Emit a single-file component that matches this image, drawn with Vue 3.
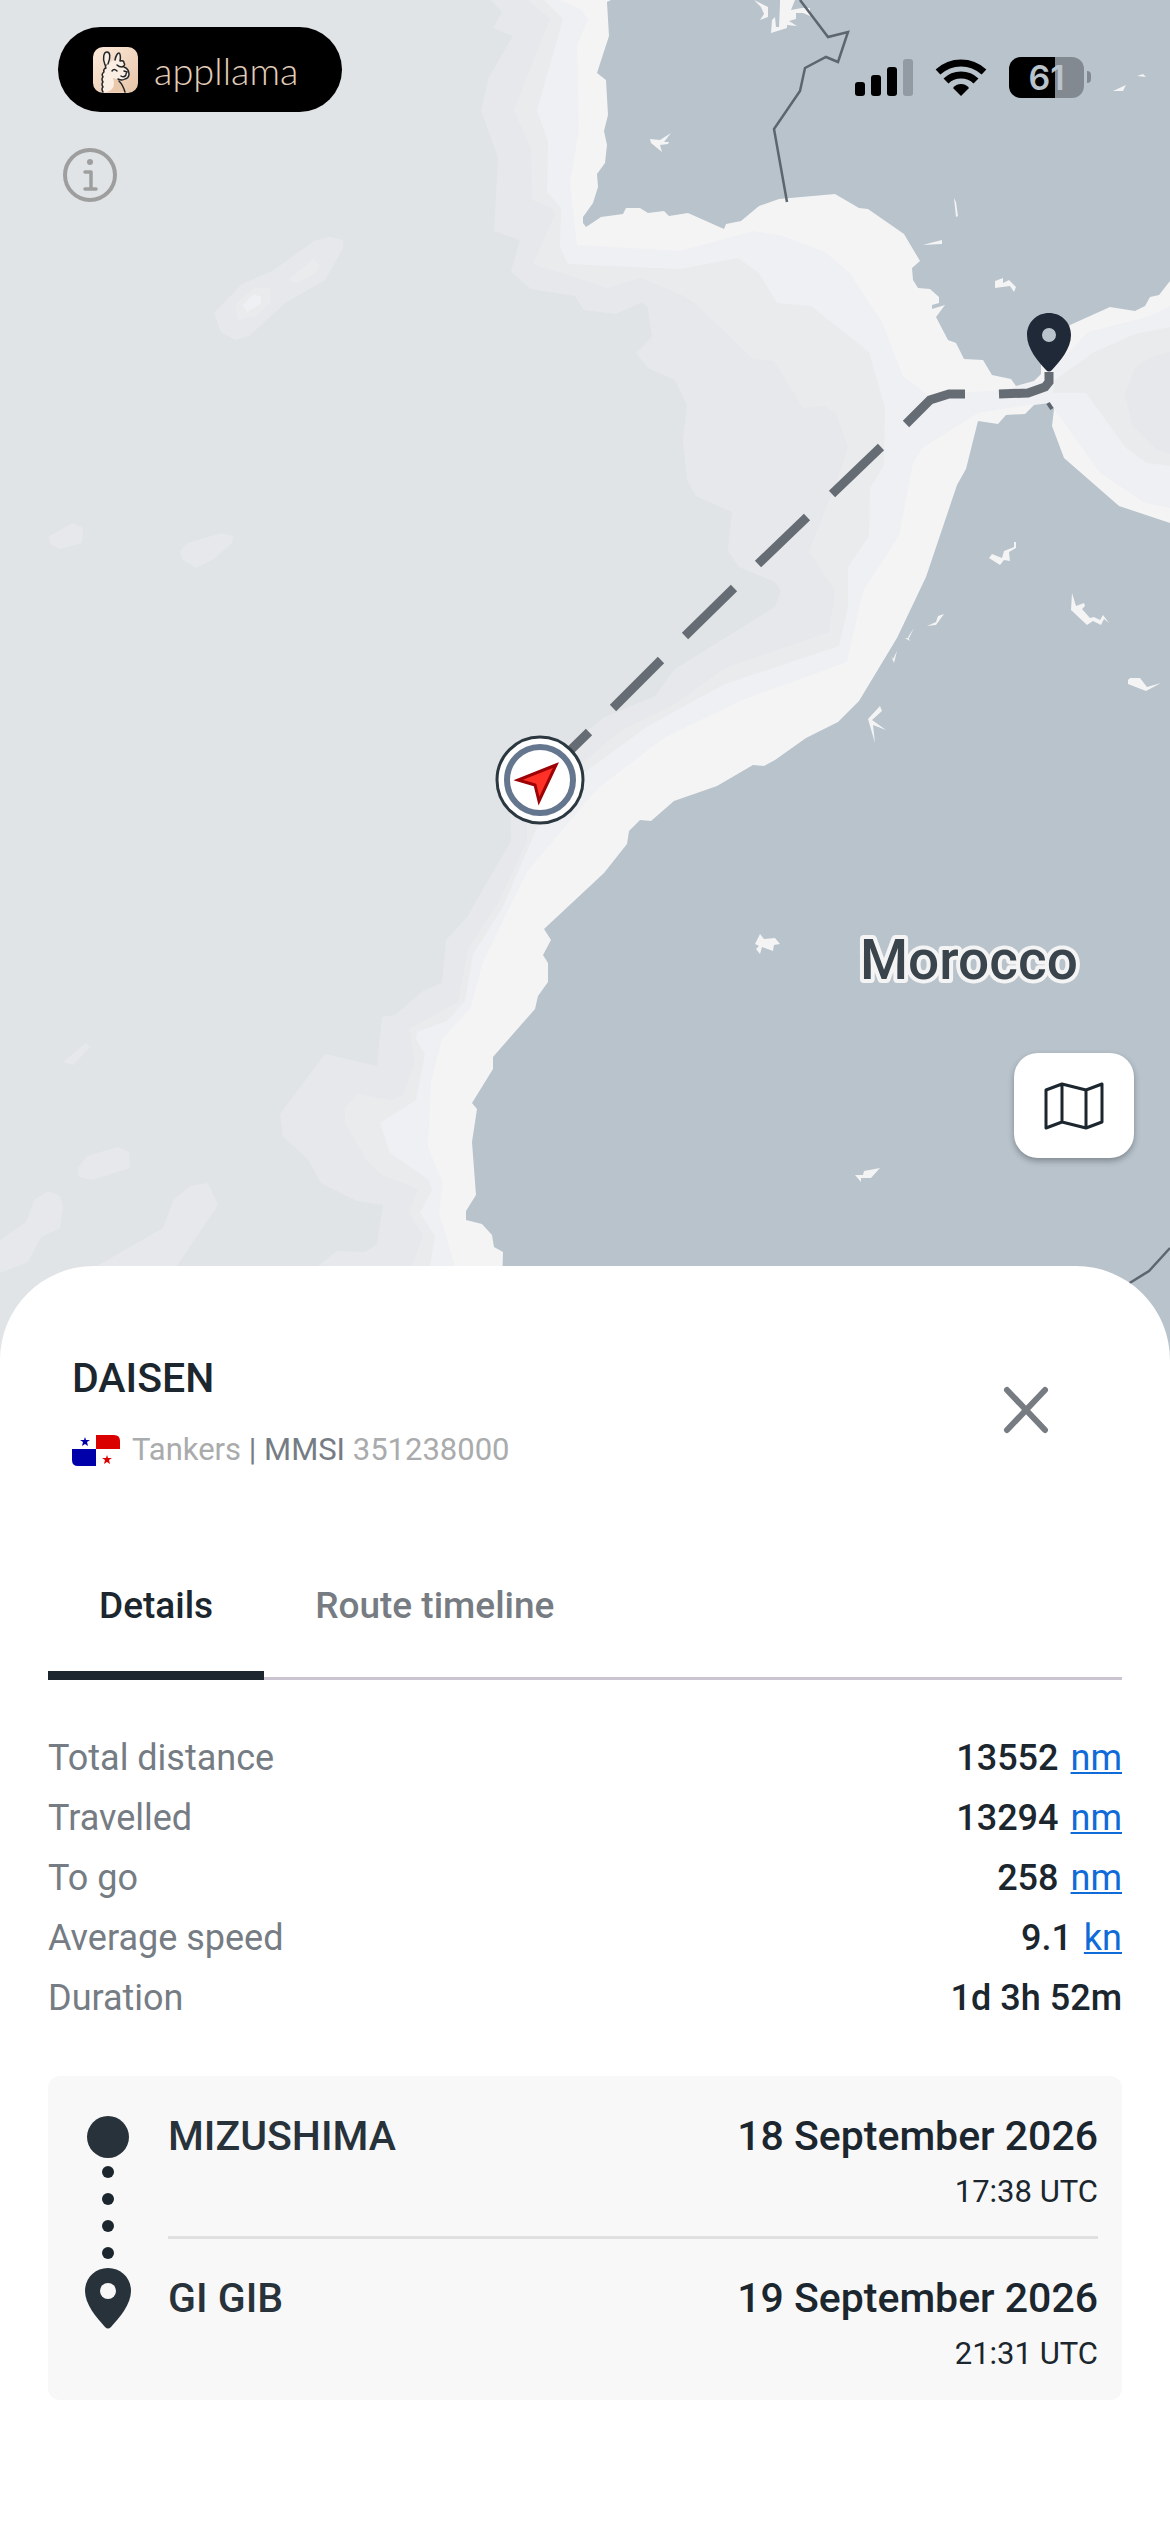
<template>
  <main class="screen">
    <section class="map">
      <!-- Bathymetry, land and route share one canvas -->
      <svg class="map-canvas" viewBox="0 0 1170 1360" preserveAspectRatio="xMidYMin slice" aria-hidden="true">
        <rect width="1170" height="1360" fill="#e0e4e7" />

        <!-- sea depth, from deep to shallow -->
        <path fill="#e7e8ec" d="M491 0 502 12 493 28 513 36 489 77 481 110 498 158 494 231 520 240 511 272 531 289 575 296 584 310 616 314 642 302 648 308 652 337 636 353 648 368 675 380 687 405 683 440 687 480 696 496 732 512 728 551 739 567 775 582 781 591 775 607 675 669 655 696 603 718 585 733 510 790 511 841 467 917 446 940 442 983 423 991 395 1015 382 1017 377 1066 325 1054 280 1114 283 1137 307 1158 321 1183 357 1201 383 1205 377 1244 365 1252 337 1251 318 1266 290 1300H1170V0Z" />
        <path fill="#eaebed" d="M528 0 550 19 514 110 531 149 532 200 552 208 555 214 533 264 607 288 642 278 686 297 697 305 753 359 774 361 803 408 824 406 836 413 848 447 836 483 809 551 835 591 829 632 725 668 675 704 620 731 585 761 527 815 527 842 498 903 468 949 458 1002 409 1029 415 1062 403 1095 391 1100 358 1094 345 1108 345 1123 368 1162 382 1175 418 1189 409 1213 423 1235 412 1266 400 1300H1170V0Z" />
        <path fill="#eff0f3" d="M544 0 563 19 537 110 548 142 547 192 561 208 560 247 568 264 680 269 738 258 759 273 777 303 811 306 869 352 885 408 884 465 870 488 869 536 848 567 848 607 839 646 725 684 648 726 585 772 537 828 502 909 473 954 465 1001 447 1021 417 1032 416 1039 425 1054 416 1100 380 1123 390 1153 429 1180 432 1190 420 1213 435 1236 430 1266 425 1300H1170V0Z" />
        <path fill="#f4f4f4" d="M560 0 582 10 588 20 577 45 579 130 570 183 577 245 680 251 753 231 783 236 825 252 849 272 882 322 903 376 928 395 922 448 913 463 899 536 863 591 847 662 740 701 664 738 597 789 585 803 527 872 483 962 470 1009 442 1039 431 1083 428 1147 443 1183 439 1213 455 1266 465 1300H1170V0Z" />
        <path fill="#eff0f3" d="M927 395 1002 390 1045 380 1055 367 1088 332 1147 317 1170 306V508L1145 503 1100 473 1054 409 1034 404 978 413 922 448 913 463 900 462Z" />
        <path fill="#eaebed" d="M1170 327 1135 334 1094 352 1055 380 1053 393 1086 393 1126 448 1147 463 1170 466Z" />
        <path fill="#e7e8ec" d="M1170 352 1153 356 1135 368 1125 393 1132 425 1157 450 1170 454Z" />

        <!-- seamounts -->
        <g fill="#e7e8ec">
          <path d="M214 313 242 284 274 270 314 241 330 237 343 240 343 248 325 280 285 303 249 336 235 340 221 332Z" />
          <path d="M49 536 73 523 83 528 82 543 60 549 50 544Z" />
          <path d="M180 551 188 543 221 533 233 536 232 543 214 559 196 568 182 559Z" />
          <path d="M63 1062 86 1043 90 1047 73 1065Z" />
          <path d="M78 1168 87 1156 118 1147 129 1152 130 1168 92 1180 79 1177Z" />
          <path d="M0 1240 26 1222 34 1200 48 1191 60 1196 63 1206 60 1228 41 1237 28 1262 0 1273Z" />
          <path d="M97 1266 163 1228 174 1199 190 1186 208 1183 218 1205 177 1266 160 1290H70Z" />
        </g>
        <g fill="#eaebed">
          <path d="M235 305 254 288 271 288 270 303 256 316 238 320Z" />
          <path d="M288 280 313 259 320 265 315 273 297 283Z" />
        </g>
        <path fill="#eff0f3" d="M243 305 254 294 261 297 261 304 247 312Z" />

        <!-- land -->
        <g fill="#b8c3cc">
          <path d="M611 0 607 2 609 36 597 73 606 80 608 115 604 131 607 145 605 163 597 174 598 187 593 203 583 217 583 223 586 227 601 217 623 214 626 208 640 208 648 213 664 211 669 216 688 213 724 229 726 224 741 221 759 206 779 199 835 194 859 208 868 209 904 234 920 261 912 268 913 280 918 288 930 289 939 297 939 303 932 305 932 309 945 305 936 317 948 340 956 343 964 359 983 360 992 375 1011 379 1016 386 1034 381 1041 374 1041 365 1070 325 1110 307 1135 311 1145 306 1150 297 1159 295 1170 281V0Z" />
          <path d="M1170 523 1119 506 1064 458 1052 426 1054 409 1050 403 1034 405 1025 414 1006 415 998 424 978 421 966 469 957 485 926 577 897 638 859 701 838 722 806 738 775 760 764 766 753 765 717 786 674 801 651 821 640 820 629 831 627 844 604 873 544 929 551 940 543 955 548 963 548 982 538 996 535 1009 493 1057 493 1069 472 1103 477 1109 472 1142 476 1195 466 1211 466 1220 482 1224 492 1235 494 1247 503 1252 500 1360H1170Z" />
        </g>

        <!-- inland water -->
        <path
          v-for="lake in lakes"
          :key="lake"
          :d="lake"
          fill="#f4f4f4"
        />

        <!-- country borders -->
        <g fill="none" stroke="#5d666e" stroke-width="2.500">
          <path d="M800 0 828 37 848 32 838 62 826 57 805 68 800 91 774 129 787 202" />
          <path d="M1170 1248 1149 1271 1120 1289" />
          <path d="M1048 403 1052 409" stroke-width="4" />
        </g>

        <!-- planned route -->
        <path
          fill="none"
          stroke="#666c73"
          stroke-width="9"
          d="M1049 372V382L1045 387 1028 393 999 394M965 394H949L930 400 906 424M881 447 832 494M807 517 758 564M734 588 685 636M661 660 613 708M589 732 545 775"
        />

        <text class="country" x="860" y="979">Morocco</text>

        <!-- destination pin -->
        <path
          fill="#202938"
          fill-rule="evenodd"
          d="M1049 313C1037 313 1027 322 1027 335C1027 349 1038 361 1046 370Q1049 373 1052 370C1060 361 1071 349 1071 335C1071 322 1061 313 1049 313ZM1049 328A7 7 0 1 1 1049 342A7 7 0 1 1 1049 328Z"
        />

        <!-- vessel -->
        <circle cx="540" cy="780" r="43" fill="#fff" stroke="#2c3840" stroke-width="3" />
        <circle cx="540" cy="780" r="33" fill="none" stroke="#65768f" stroke-width="6" />
        <path d="M556 765 518 780 535 785 539 801Z" fill="#ff3025" stroke="#9c0206" stroke-width="3" stroke-miterlimit="8" />
      </svg>

      <header class="status-bar">
        <div class="brand">
          <svg class="brand-icon" width="45" height="46" viewBox="0 0 45 46" aria-hidden="true">
            <defs>
              <linearGradient id="llama-bg" x1="0" y1="0" x2="1" y2="1">
                <stop offset="0" stop-color="#fdeadb" />
                <stop offset="1" stop-color="#e6c5a8" />
              </linearGradient>
            </defs>
            <rect width="45" height="46" rx="10" fill="url(#llama-bg)" />
            <path fill="#fbeee3" d="M12 17C10 10 11 5 14 5S17 11 16 16L21 13C23 8 25 6 27 6L27 13 31 15 31 19 36 23V28L34 32 27 33 20 31 24 35 32 45.500H10L9 30 13 20Z" />
            <path fill="#e9c8ab" d="M20 31 27 34 32 45.500H12Q24 43 20 31Z" />
            <g fill="none" stroke="#22262b" stroke-width="1.500" stroke-linecap="round" stroke-linejoin="round">
              <path d="M12 18C9 11 11 5 14 5S18 10 15 17M22 13C23 8 25 6 26 6S28 10 27 14Q31 13 31 16 33 18 29 20 26 20 24 18M31 20Q36 22 36 27 36 31 32 32 29 34 25 32M19 24Q21 21 24 24M31 24 34 25 33 27M28 29Q31 31 33 28" />
              <path d="M13 18Q12 20 13 21 10 22 11 25 8 27 10 30 8 32 10 35 8 37 10 40 8 42 10 45M26 34Q30 38 32 45" />
            </g>
          </svg>
          <span class="brand-name">appllama</span>
        </div>

        <div class="device-status">
          <svg width="58" height="38" viewBox="0 0 58 38" role="img" aria-label="Signal">
            <rect x="0" y="24" width="10" height="14" rx="3" />
            <rect x="16" y="17" width="10" height="21" rx="3" />
            <rect x="32" y="9" width="10" height="29" rx="3" />
            <rect x="48" y="1" width="10" height="37" rx="3" fill="#929ba4" />
          </svg>
          <svg width="52" height="38" viewBox="0 0 52 38" role="img" aria-label="Wi-Fi">
            <g fill="none" stroke="#000" stroke-width="7">
              <path d="M3 14Q13 5 26 5T49 14" />
              <path d="M11 23Q17 17 26 17T41 23" />
            </g>
            <path d="M26 38 18 30Q21 26 26 26T34 30Z" />
          </svg>
          <div class="battery">
            <span class="battery-level">61</span>
            <span class="battery-cap"></span>
          </div>
        </div>
      </header>

      <button class="info-button" type="button" aria-label="Map information">
        <svg width="54" height="54" viewBox="0 0 54 54">
          <circle cx="27" cy="27" r="25" fill="none" stroke="#9e9e9e" stroke-width="4" />
          <circle cx="27" cy="14" r="3" fill="#9e9e9e" />
          <path d="M22 24H28V41M22 41H33" fill="none" stroke="#9e9e9e" stroke-width="3.500" stroke-linecap="round" stroke-linejoin="round" />
        </svg>
      </button>

      <button class="layer-button" type="button" aria-label="Map layers">
        <svg width="64" height="52" viewBox="0 0 64 52">
          <path d="M4 10 20 4 44 10 60 4V42L44 48 20 42 4 48ZM20 4V42M44 10V48" fill="none" stroke="#1b262e" stroke-width="3" stroke-linejoin="round" />
        </svg>
      </button>
    </section>

    <section class="sheet">
      <header class="vessel">
        <div class="vessel-info">
          <h1>{{ vessel.name }}</h1>
          <p class="vessel-meta">
            <svg class="flag" width="48" height="31" viewBox="0 0 48 31" role="img" aria-label="Panama">
              <path d="M24 0H42Q48 0 48 6V14H24Z" fill="#da0000" />
              <path d="M0 14H24V31H6Q0 31 0 25Z" fill="#0000ab" />
              <path d="M13 2 14 5H18L15 7 16 11 13 9 10 11 11 7 8 5H12Z" fill="#0000ab" />
              <path d="M35 20 36 23H40L37 25 38 29 35 27 32 29 33 25 30 23H34Z" fill="#da0000" />
            </svg>
            <span>{{ vessel.type }} <b>| MMSI</b> {{ vessel.mmsi }}</span>
          </p>
        </div>
        <button class="close-button" type="button" aria-label="Close">
          <svg width="48" height="48" viewBox="0 0 48 48">
            <path d="M5 4 43 44M43 4 5 44" stroke="#777c82" stroke-width="6" stroke-linecap="round" />
          </svg>
        </button>
      </header>

      <div class="tabs" role="tablist">
        <button
          v-for="tab in tabs"
          :key="tab.id"
          type="button"
          role="tab"
          class="tab"
          :class="{ active: activeTab === tab.id }"
          :aria-selected="activeTab === tab.id"
          @click="activeTab = tab.id"
        >
          {{ tab.label }}
        </button>
      </div>

      <dl class="stats">
        <div v-for="row in stats" :key="row.label" class="stat">
          <dt>{{ row.label }}</dt>
          <dd>
            {{ row.value }}
            <a v-if="row.unit" href="#">{{ row.unit }}</a>
          </dd>
        </div>
      </dl>

      <div class="voyage">
        <svg class="voyage-track" width="72" height="224" viewBox="0 0 72 224" aria-hidden="true">
          <circle cx="36" cy="29" r="21" fill="#28323a" />
          <g fill="#1b262e">
            <circle cx="36" cy="64" r="6" />
            <circle cx="36" cy="91" r="6" />
            <circle cx="36" cy="118" r="6" />
            <circle cx="36" cy="145" r="6" />
          </g>
          <path
            fill="#28323a"
            d="M36 160C23 160 13 170 13 183C13 196 24 209 33 219Q36 222 39 219C48 209 59 196 59 183C59 170 49 160 36 160Z"
          />
          <circle cx="36" cy="183" r="8" fill="#f8f8f8" />
        </svg>
        <ul class="stops">
          <li v-for="stop in stops" :key="stop.port" class="stop">
            <span class="port">{{ stop.port }}</span>
            <div class="when">
              <strong>{{ stop.date }}</strong>
              <span>{{ stop.time }}</span>
            </div>
          </li>
        </ul>
      </div>
    </section>
  </main>
</template>

<script setup>
import { ref } from 'vue';

const activeTab = ref('details');

const tabs = [
  { id: 'details', label: 'Details' },
  { id: 'timeline', label: 'Route timeline' }
];

const vessel = {
  name: 'DAISEN',
  type: 'Tankers',
  mmsi: '351238000'
};

const stats = [
  { label: 'Total distance', value: '13552', unit: 'nm' },
  { label: 'Travelled', value: '13294', unit: 'nm' },
  { label: 'To go', value: '258', unit: 'nm' },
  { label: 'Average speed', value: '9.1', unit: 'kn' },
  { label: 'Duration', value: '1d 3h 52m' }
];

const stops = [
  { port: 'MIZUSHIMA', date: '18 September 2026', time: '17:38 UTC' },
  { port: 'GI GIB', date: '19 September 2026', time: '21:31 UTC' }
];

// Lakes and reservoirs on the map canvas
const lakes = [
  'M754 0 768 7 768 17 760 20 764 14 761 7Z',
  'M780 0 795 0 791 10 802 8 810 8 810 16 803 13 796 13 796 19 789 21 797 26 787 25 787 28 771 33 772 20 775 17 776 27 779 27 780 3Z',
  'M650 139 660 140 671 133 664 142 669 142 668 144 660 145 662 152 651 143Z',
  'M954 198 956 202 958 216 956 217Z',
  'M923 245 930 243 942 240 942 244Z',
  'M995 281 1003 278 1003 283 1009 280 1016 287 1014 292 1010 286 995 288Z',
  'M1113 91 1126 85 1123 91Z',
  'M1137 76 1143 74 1146 77Z',
  'M989 558 992 554 1002 558 1004 551 1014 547 1014 542 1016 542 1016 548 1009 552 1010 561 1004 560 1000 565Z',
  'M1072 593 1076 606 1084 603 1085 606 1082 609 1090 618 1094 617 1100 620 1103 615 1109 623 1104 619 1101 625 1093 621 1087 625 1071 610Z',
  'M1128 680 1130 678 1140 678 1147 687 1161 683 1146 691 1128 684Z',
  'M868 719 880 706 882 711 872 720 886 730 873 725 875 743Z',
  'M927 626 936 622 938 616 944 614 936 625Z',
  'M914 628 908 637 910 641 905 638 909 638Z',
  'M891 656 893 659 897 651 894 663Z',
  'M755 944 760 934 764 939 775 938 780 944 774 945 773 951 762 947 760 954 756 949 759 946Z',
  'M855 1175 863 1175 864 1171 880 1168 871 1178 861 1178 861 1182Z'
];
</script>

<style>
body {
  margin: 0;
  background: #fff;
}
</style>

<style scoped>
.screen {
  display: flex;
  flex-direction: column;
  min-height: 100vh;
  font-family: Roboto, "Liberation Sans", sans-serif;
  color: #1b262e;
}

button {
  border: 0;
  padding: 0;
  background: none;
  font: inherit;
  cursor: pointer;
}

svg {
  display: block;
  flex: none;
}

/* Map */
.map {
  position: relative;
  flex: 1 0 auto;
  display: flex;
  flex-direction: column;
  align-items: flex-start;
  min-height: 1360px;
  box-sizing: border-box;
  padding: 27px 36px 202px 58px;
  background: #e0e4e7;
}
.map-canvas {
  position: absolute;
  inset: 0;
  width: 100%;
  height: 100%;
}
.country {
  font-size: 55px;
  font-weight: 500;
  fill: #3a444c;
  stroke: #f4f4f4;
  stroke-width: 8px;
  stroke-linejoin: round;
  paint-order: stroke;
}

.status-bar {
  position: relative;
  align-self: stretch;
  display: flex;
  justify-content: space-between;
  align-items: center;
  padding-right: 43px;
}
.brand {
  display: flex;
  align-items: center;
  gap: 16px;
  box-sizing: border-box;
  min-width: 284px;
  height: 85px;
  padding: 0 35px;
  border-radius: 43px;
  background: #000;
}
.brand-name {
  font-family: Lato, sans-serif;
  font-size: 38px;
  font-weight: 300;
  line-height: 40px;
  color: #e3cdb9;
}
.device-status {
  display: flex;
  align-items: center;
  gap: 22px;
  padding-top: 15px;
}
.battery {
  display: flex;
  align-items: center;
  gap: 3px;
}
.battery-level {
  width: 75px;
  border-radius: 12px;
  background: linear-gradient(90deg, #000 61%, #838991 61%);
  font-family: Inter, sans-serif;
  font-size: 34px;
  font-weight: 600;
  line-height: 41px;
  text-align: center;
  color: #b8c3cc;
}
.battery-cap {
  width: 4px;
  height: 12px;
  border-radius: 0 4px 4px 0;
  background: #838991;
}

.info-button {
  position: relative;
  margin: 36px 0 0 5px;
}
.layer-button {
  position: relative;
  display: flex;
  align-items: center;
  justify-content: center;
  width: 120px;
  height: 105px;
  margin-top: auto;
  align-self: flex-end;
  border-radius: 24px;
  background: #fff;
  box-shadow: 0 3px 6px rgba(0, 0, 0, 0.3);
}

/* Bottom sheet */
.sheet {
  position: relative;
  margin-top: -94px;
  padding: 84px 48px 132px;
  border-radius: 94px 94px 0 0;
  background: #fff;
}
.vessel {
  display: flex;
  justify-content: space-between;
  align-items: center;
  padding: 0 72px 60px 24px;
}
h1 {
  margin: 0 0 24px;
  font-size: 41px;
  font-weight: 500;
  line-height: 56px;
}
.vessel-meta {
  display: flex;
  align-items: center;
  gap: 12px;
  margin: 0;
  font-size: 31px;
  line-height: 40px;
  color: #aaabac;
}
.vessel-meta b {
  font-weight: 400;
  color: #757c83;
}

.tabs {
  display: flex;
  box-shadow: inset 0 -3px #c9c4d0;
}
.tab {
  height: 150px;
  padding: 0 51px;
  font-size: 37px;
  font-weight: 500;
  color: #777c83;
}
.tab.active {
  color: #1b262e;
  box-shadow: inset 0 -9px #1b262e;
}

.stats {
  margin: 48px 0;
}
.stat {
  display: flex;
  justify-content: space-between;
  font-size: 36px;
  line-height: 60px;
}
dt {
  color: #757c83;
}
dd {
  display: flex;
  gap: 12px;
  margin: 0;
  font-weight: 500;
}
dd a {
  font-weight: 400;
  color: #0f6bd8;
  text-decoration-thickness: 2px;
  text-underline-offset: 2px;
}

/* Departure and destination */
.voyage {
  display: flex;
  gap: 24px;
  padding: 32px 24px 26px;
  border-radius: 12px;
  background: #f8f8f8;
}
.stops {
  flex: 1;
  margin: 0;
  padding: 0;
  list-style: none;
}
.stop {
  display: flex;
  justify-content: space-between;
  font-size: 41px;
  line-height: 56px;
}
.stop + .stop {
  margin-top: 24px;
  padding-top: 31px;
  border-top: 3px solid #e0e0e0;
}
.port {
  font-weight: 500;
  color: #28323a;
}
.when {
  display: flex;
  flex-direction: column;
  align-items: flex-end;
  gap: 8px;
}
.when strong {
  font-weight: 500;
}
.when span {
  font-size: 31px;
  line-height: 40px;
}
</style>
